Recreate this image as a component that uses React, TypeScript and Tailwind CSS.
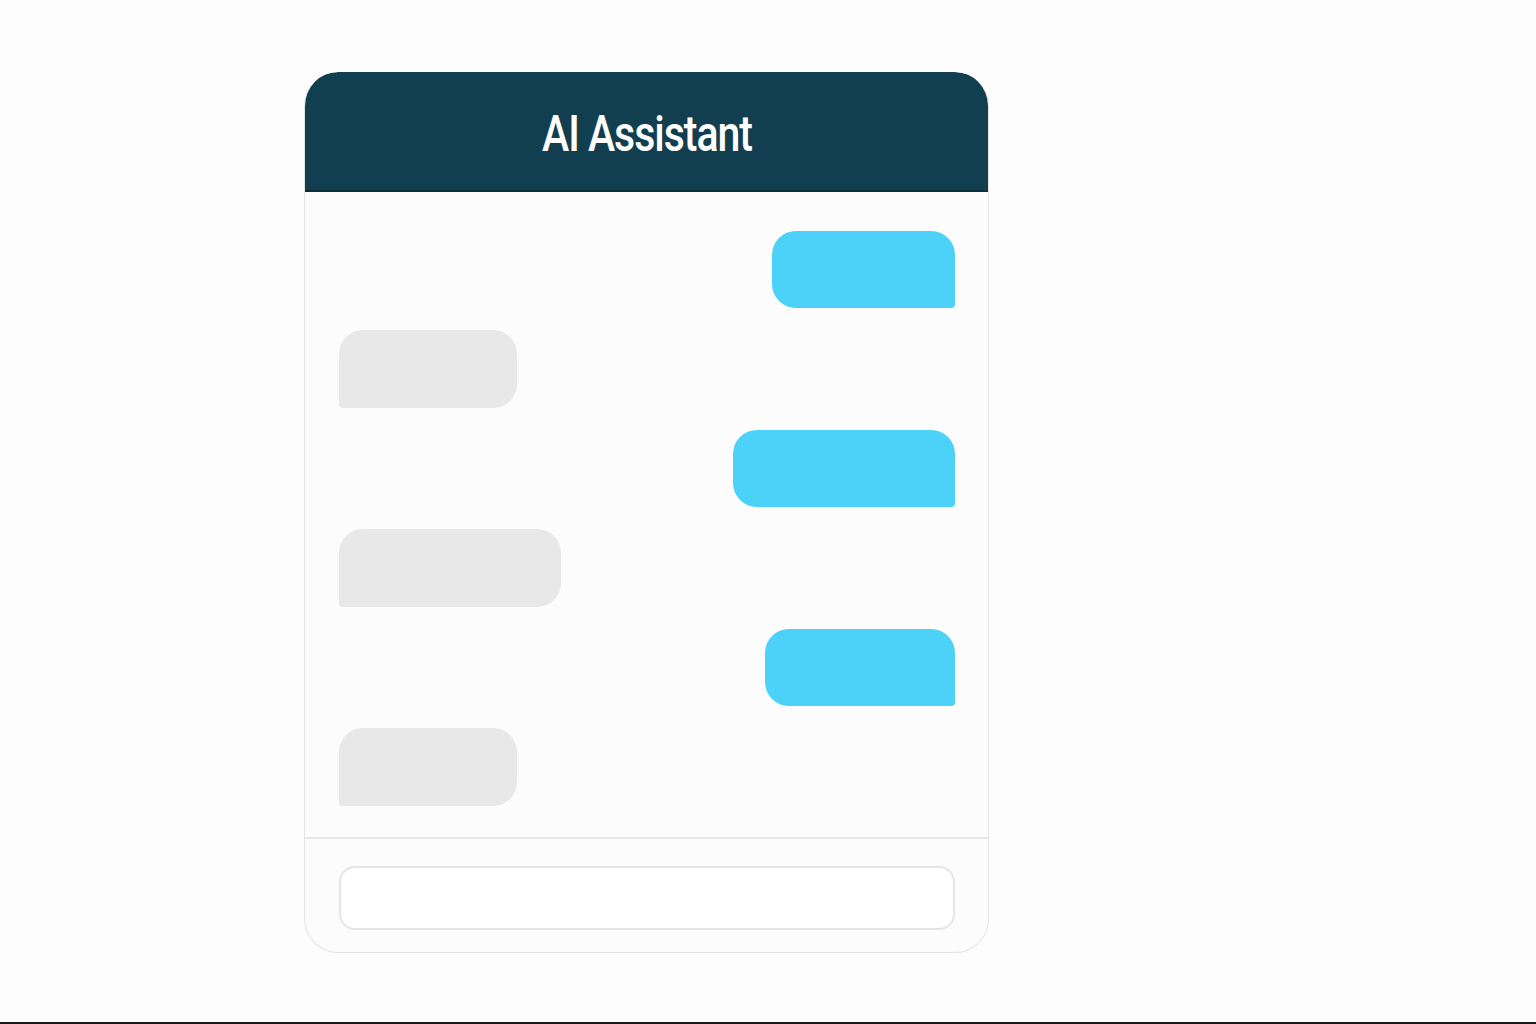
import React from 'react';

type Bubble = {
  id: number;
  fromUser: boolean;
  width: string;
};

const bubbles: Bubble[] = [
  { id: 1, fromUser: true, width: 'w-[183px]' },
  { id: 2, fromUser: false, width: 'w-[178px]' },
  { id: 3, fromUser: true, width: 'w-[222px]' },
  { id: 4, fromUser: false, width: 'w-[222px]' },
  { id: 5, fromUser: true, width: 'w-[190px]' },
  { id: 6, fromUser: false, width: 'w-[178px]' },
];

const App: React.FC = () => {
  return (
    <div
      className="relative w-[1536px] h-[1024px] bg-[#fdfdfd] overflow-hidden"
      style={{ fontFamily: 'Roboto, "Liberation Sans", sans-serif' }}
    >
      <div className="pt-[72px] pl-[304px]">
        <div className="w-[685px] h-[881px] flex flex-col rounded-t-[34px] rounded-b-[34px] bg-[#fcfcfc] border border-[#e4e4e4] border-t-0 overflow-hidden">
          {/* header */}
          <div className="h-[120px] shrink-0 bg-[#123f50] border-b-2 border-[#0d2f3c] rounded-t-[34px] flex items-center justify-center -mx-px">
            <h1 className="text-white text-[50px] font-medium leading-none scale-x-[0.82] tracking-tight mt-[6px]">
              AI Assistant
            </h1>
          </div>

          {/* messages */}
          <div className="flex flex-col gap-[22px] pt-[39px] pb-[31px] pl-[34px] pr-[33px] border-b-2 border-[#e6e6e6]">
            {bubbles.map((b) => (
              <div key={b.id} className={`flex ${b.fromUser ? 'justify-end' : 'justify-start'}`}>
                <div
                  className={
                    b.fromUser
                      ? `${b.width} h-[77px] bg-[#4cd1f8] rounded-[24px] rounded-br-[4px]`
                      : `${b.width} h-[78px] bg-[#e8e8e8] rounded-[24px] rounded-bl-[4px]`
                  }
                />
              </div>
            ))}
          </div>

          {/* input */}
          <div className="flex-1 pl-[34px] pr-[33px] pt-[27px]">
            <div className="h-[64px] bg-white border-2 border-[#e5e5e5] rounded-[16px]" />
          </div>
        </div>
      </div>
      <div className="absolute left-0 right-0 bottom-0 h-[2px] bg-[#1a1a1a]" />
    </div>
  );
};

export default App;
